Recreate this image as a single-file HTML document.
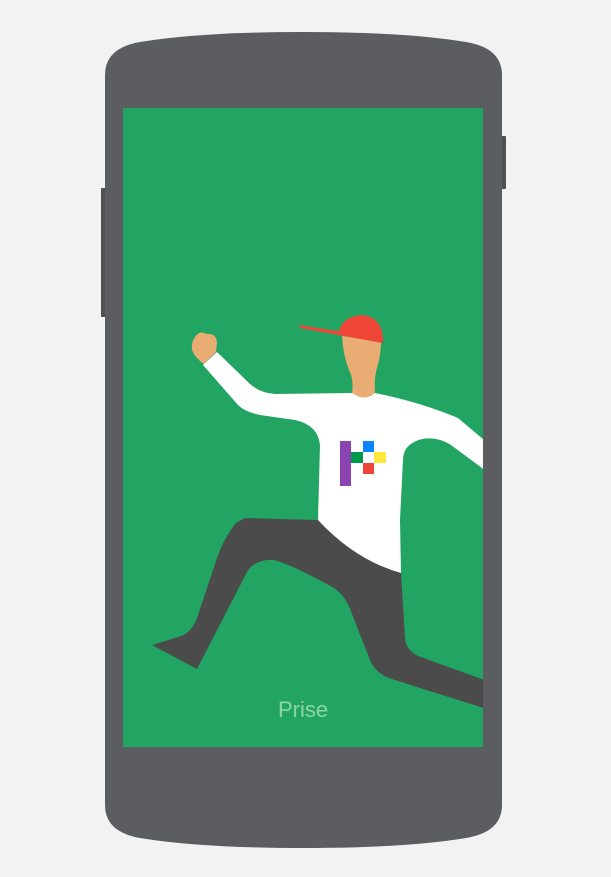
<!DOCTYPE html>
<html><head><style>
html,body{margin:0;padding:0;background:#f2f2f2;width:611px;height:877px;overflow:hidden}
svg{display:block}
</style></head><body>
<svg width="611" height="877" viewBox="0 0 611 877" xmlns="http://www.w3.org/2000/svg">
<rect x="101" y="188" width="6" height="129" rx="1" fill="#4f5155"/>
<rect x="500" y="136" width="6" height="53" rx="1" fill="#4f5155"/>
<path d="M105 75 Q105 48 140 42 Q200 32 303 32 Q406 32 466 42 Q502 48 502 75 L502 805 Q502 832 466 838 Q406 848 303 848 Q200 848 140 838 Q105 832 105 805 Z" fill="#5c5d61"/>
<rect x="123" y="108" width="360" height="639" fill="#22a463"/>
<clipPath id="c"><rect x="123" y="108" width="360" height="639"/></clipPath>
<g clip-path="url(#c)">
<path d="M318 520 L245 518 L236 523 Q226 535 218 555 L197 618 Q191 634 178 637 L152 645 L197 669 L247 572 Q255 559 274 560 Q295 566 334 588 Q346 596 352 614 L370 660 Q376 674 392 679 L420 688 L490 710 L490 682 L418 656 Q406 650 405 638 L401 573 Q355 560 318 520 Z" fill="#4b4b4b"/>
<path d="M217 352 L250 384 Q260 393 275 394 L352 393 L375 393 Q420 402 458 418 L490 445 L490 474 L455 448 Q440 436 422 439 Q403 444 403 460 L400 520 L401 573 Q355 560 318 520 L320 445 Q318 425 295 420 L260 415 Q245 412 238 405 L203 365 Z" fill="#fff"/>
<path d="M195 337 Q200 330 206 334 Q216 333 217 342 L216 352 L204 364 Q195 358 192 350 Q191 342 195 337 Z" fill="#e9ad74"/>
<path d="M342 336 L381 341 Q381 355 377 368 Q374 378 375 393 Q365 402 352 393 Q354 380 349 370 Q343 355 342 336 Z" fill="#e9ad74"/>
<path d="M338 334 Q342 316 362 315 Q383 317 383 342 Z" fill="#ef4438"/>
<path d="M299 325 L300 328 L383 343 L381 338 Z" fill="#ef4438"/>
<rect x="340" y="441" width="11" height="45" fill="#8a43b0"/>
<rect x="363" y="441" width="11" height="11" fill="#0a84ff"/>
<rect x="351" y="452" width="12" height="11" fill="#009a4e"/>
<rect x="374" y="452" width="12" height="11" fill="#ffe83b"/>
<rect x="363" y="463" width="11" height="11" fill="#ef4438"/>
</g>
<text x="303" y="717" text-anchor="middle" font-family="Liberation Sans, sans-serif" font-size="22" fill="#8fd4a9">Prise</text>
</svg>
</body></html>
